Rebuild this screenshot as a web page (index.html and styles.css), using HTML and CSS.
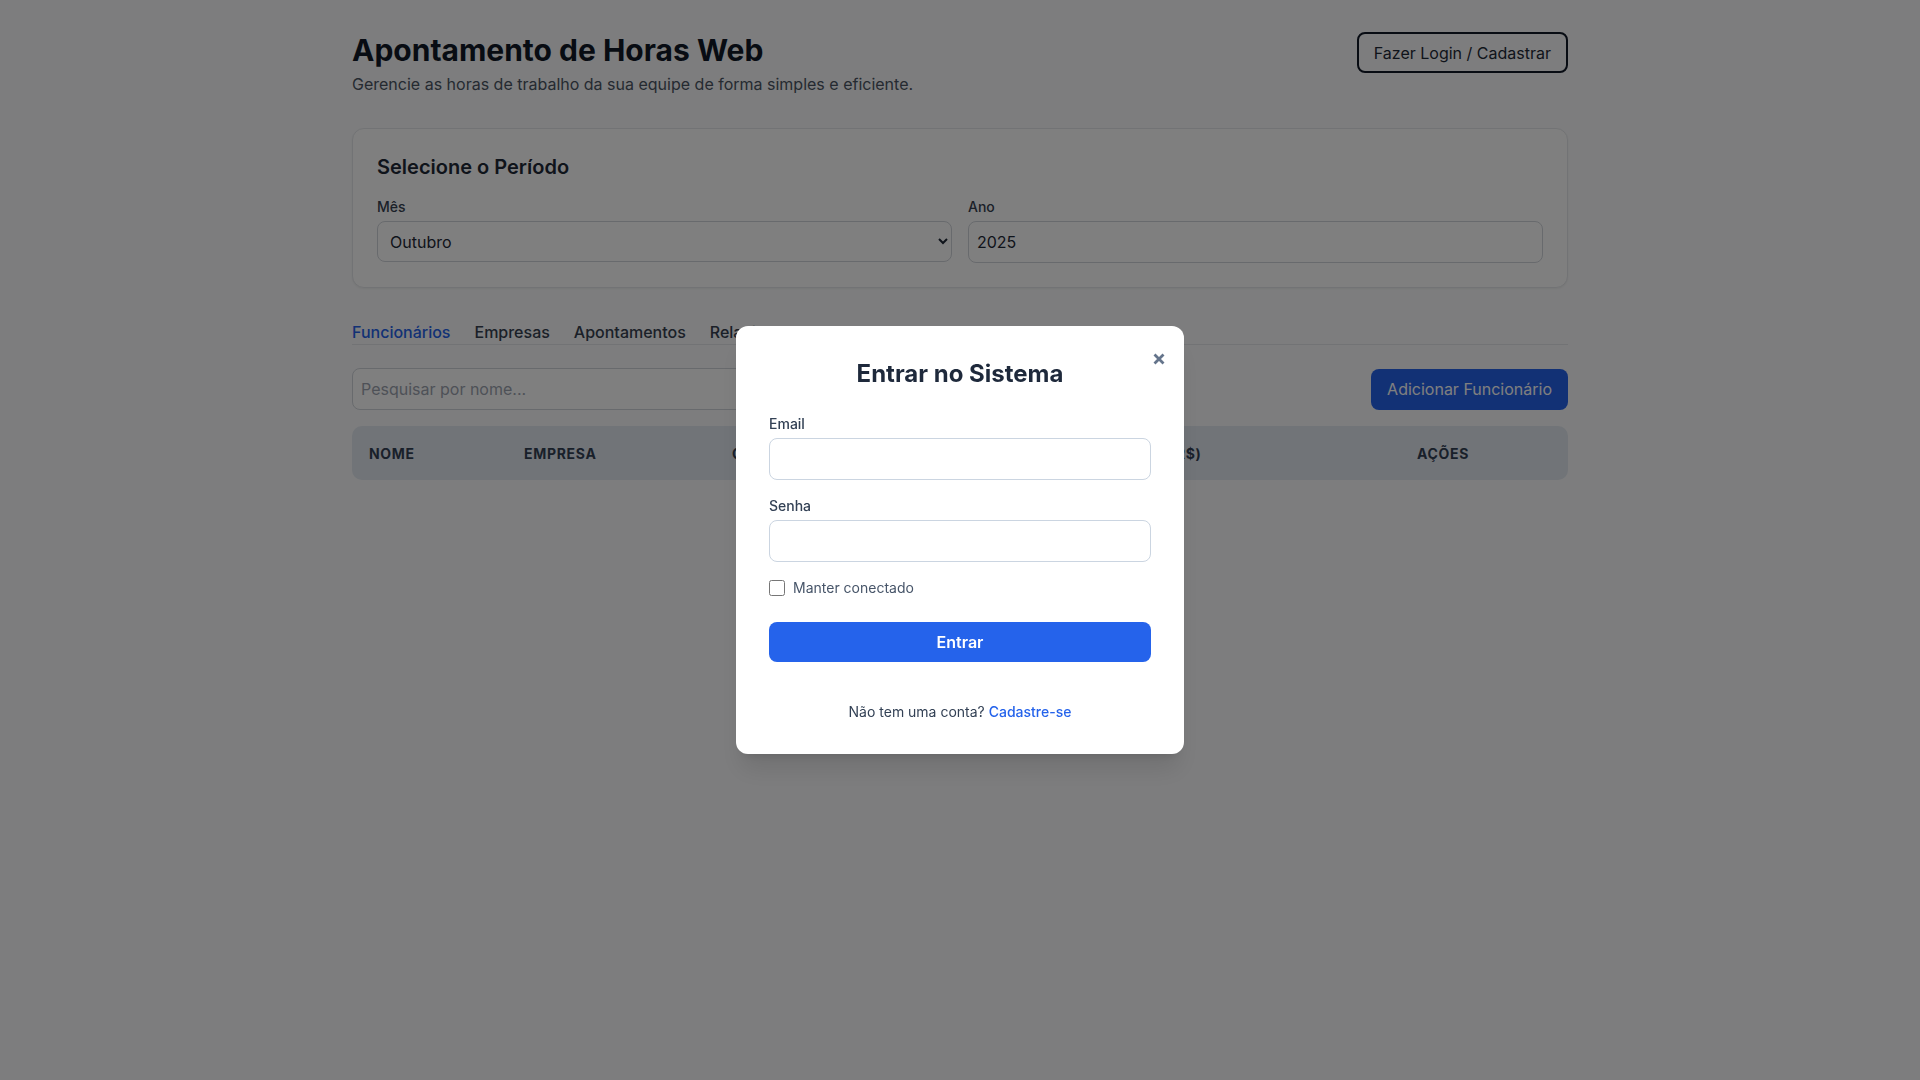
FILE: index.html
```html
<!DOCTYPE html>
<html lang="pt-BR">
<head>
<meta charset="utf-8">
<title>Apontamento de Horas Web</title>
<link rel="stylesheet" href="styles.css">
</head>
<body>
<div class="container">
  <header class="page-header">
    <div>
      <h1 class="page-title">Apontamento de Horas Web</h1>
      <p class="page-subtitle">Gerencie as horas de trabalho da sua equipe de forma simples e eficiente.</p>
    </div>
    <button class="btn-outline">Fazer Login / Cadastrar</button>
  </header>

  <section class="card">
    <h2 class="card-title">Selecione o Período</h2>
    <div class="period-grid">
      <div>
        <label class="field-label">Mês</label>
        <select class="field">
          <option>Janeiro</option><option>Fevereiro</option><option>Março</option>
          <option>Abril</option><option>Maio</option><option>Junho</option>
          <option>Julho</option><option>Agosto</option><option>Setembro</option>
          <option selected>Outubro</option><option>Novembro</option><option>Dezembro</option>
        </select>
      </div>
      <div>
        <label class="field-label">Ano</label>
        <input class="field" type="number" value="2025">
      </div>
    </div>
  </section>

  <nav class="tabs">
    <button class="tab active">Funcionários</button>
    <button class="tab">Empresas</button>
    <button class="tab">Apontamentos</button>
    <button class="tab">Relatórios</button>
  </nav>

  <div class="toolbar">
    <input class="field search" type="text" placeholder="Pesquisar por nome...">
    <button class="btn-primary">Adicionar Funcionário</button>
  </div>

  <div class="table-head">
    <div class="th">Nome</div>
    <div class="th">Empresa</div>
    <div class="th">Cargo</div>
    <div class="th">Valor Hora (R$)</div>
    <div class="th">Ações</div>
  </div>
</div>

<div class="overlay">
  <div class="modal">
    <button class="modal-close" aria-label="Fechar">
      <svg width="12" height="12" viewBox="0 0 12 12"><path d="M1.5 1.5 L10.5 10.5 M10.5 1.5 L1.5 10.5" stroke="#64748b" stroke-width="2.8" fill="none"/></svg>
    </button>
    <h2 class="modal-title">Entrar no Sistema</h2>
    <div class="form-group">
      <label class="modal-label">Email</label>
      <input class="modal-input" type="email">
    </div>
    <div class="form-group">
      <label class="modal-label">Senha</label>
      <input class="modal-input" type="password">
    </div>
    <label class="remember">
      <input type="checkbox" class="checkbox">
      <span>Manter conectado</span>
    </label>
    <button class="btn-submit">Entrar</button>
    <p class="modal-footer">Não tem uma conta? <a class="link" href="#">Cadastre-se</a></p>
  </div>
</div>
</body>
</html>
```

FILE: styles.css
```css
* { box-sizing: border-box; }

body {
  margin: 0;
  background: #fafbfc;
  font-family: "Inter", "Noto Sans", sans-serif;
  color: #1f2937;
}

.container {
  max-width: 1280px;
  margin: 0 auto;
  padding: 32px 32px 0;
}

.page-header {
  display: flex;
  justify-content: space-between;
  align-items: flex-start;
  margin-bottom: 32px;
}

.page-title {
  margin: 0;
  font-size: 30px;
  line-height: 36px;
  font-weight: 700;
  color: #111827;
}

.page-subtitle {
  margin: 4px 0 0;
  font-size: 16px;
  line-height: 24px;
  color: #4b5563;
}

.btn-outline {
  height: 41px;
  padding: 0 15px;
  border: 2px solid #111827;
  border-radius: 8px;
  background: transparent;
  font-family: inherit;
  font-size: 16px;
  color: #1f2937;
}

.card {
  background: #ffffff;
  border: 1px solid #e5e7eb;
  border-radius: 12px;
  box-shadow: 0 1px 2px rgba(0,0,0,0.05);
  padding: 24px;
  margin-bottom: 32px;
}

.card-title {
  margin: 0 0 16px;
  font-size: 20px;
  line-height: 28px;
  font-weight: 600;
  color: #1f2937;
}

.period-grid {
  display: grid;
  grid-template-columns: 1fr 1fr;
  gap: 16px;
}

.field-label {
  display: block;
  margin-bottom: 4px;
  font-size: 14px;
  line-height: 20px;
  font-weight: 500;
  color: #374151;
}

.field {
  width: 100%;
  height: 42px;
  padding: 8px;
  border: 1px solid #d1d5db;
  border-radius: 8px;
  background: #ffffff;
  font-family: inherit;
  font-size: 16px;
  line-height: 24px;
  color: #1f2937;
}

select.field { height: 41px; }

.field::placeholder { color: #9ca3af; }

.tabs {
  display: flex;
  gap: 24px;
  padding-top: 1px;
  border-bottom: 1px solid #e5e7eb;
  margin-bottom: 23px;
}

.tab {
  background: none;
  border: none;
  padding: 0;
  font-family: inherit;
  font-size: 16px;
  line-height: 23px;
  font-weight: 500;
  color: #374151;
}

.tab.active { color: #2563eb; }

.toolbar {
  display: flex;
  justify-content: space-between;
  align-items: center;
  margin-bottom: 16px;
}

.search { width: 448px; }

.btn-primary {
  height: 41px;
  padding: 0 16px;
  border: none;
  border-radius: 8px;
  background: #2563eb;
  color: #ffffff;
  font-family: inherit;
  font-size: 16px;
}

.table-head {
  display: grid;
  grid-template-columns: 155px 208px 335px 350px 168px;
  align-items: center;
  height: 54px;
  background: #e2e8f0;
  border-radius: 10px;
}

.th {
  padding: 0 16px 0 17px;
  font-size: 14px;
  font-weight: 700;
  text-transform: uppercase;
  letter-spacing: 0.05em;
  color: #334155;
}

.overlay {
  position: fixed;
  inset: 0;
  background: rgba(0, 0, 0, 0.5);
  display: flex;
  align-items: center;
  justify-content: center;
}

.modal {
  position: relative;
  width: 448px;
  padding: 32px 33px;
  background: #ffffff;
  border-radius: 12px;
  box-shadow: 0 20px 25px -5px rgba(0,0,0,0.1), 0 8px 10px -6px rgba(0,0,0,0.1);
}

.modal-close {
  position: absolute;
  top: 27px;
  right: 19px;
  width: 12px;
  height: 12px;
  padding: 0;
  border: none;
  background: none;
  display: block;
}

.modal-close svg { display: block; }

.modal-title {
  margin: 0 0 24px;
  text-align: center;
  font-size: 24px;
  line-height: 32px;
  font-weight: 700;
  color: #1e293b;
}

.form-group { margin-bottom: 16px; }

.modal-label {
  display: block;
  margin-bottom: 4px;
  font-size: 14px;
  line-height: 20px;
  font-weight: 500;
  color: #334155;
}

.modal-input {
  display: block;
  width: 100%;
  height: 42px;
  padding: 8px 12px;
  border: 1px solid #cbd5e1;
  border-radius: 8px;
  font-family: inherit;
  font-size: 16px;
}

.remember {
  display: flex;
  align-items: center;
  gap: 8px;
  margin-bottom: 24px;
  font-size: 14px;
  line-height: 20px;
  color: #475569;
}

.checkbox {
  width: 16px;
  height: 16px;
  margin: 0;
}

.btn-submit {
  display: block;
  width: 100%;
  height: 40px;
  border: none;
  border-radius: 8px;
  background: #2563eb;
  color: #ffffff;
  font-family: inherit;
  font-size: 16px;
  font-weight: 600;
}

.modal-footer {
  margin: 40px 0 0;
  text-align: center;
  font-size: 14px;
  line-height: 20px;
  color: #334155;
}

.link {
  color: #2563eb;
  font-weight: 500;
  text-decoration: none;
}
```
